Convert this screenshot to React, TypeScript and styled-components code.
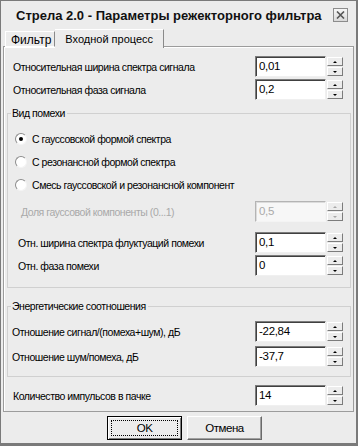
import React from 'react';
import styled, {createGlobalStyle} from 'styled-components';

const GlobalStyle = createGlobalStyle`
  html, body {
    margin: 0;
    padding: 0;
    background: #ececec;
  }
  body {
    font-family: "Liberation Sans", Arial, sans-serif;
    font-size: 10.5px;
    letter-spacing: -0.45px;
    color: #000;
  }
  * {
    box-sizing: border-box;
  }
`;

const Window = styled.div`
  width: 358px;
  height: 446px;
  background: #ececec;
  border-style: solid;
  border-color: #7a7a7a;
  border-width: 1px 2px 3px 1px;
  padding: 0 2px;
  display: flex;
  flex-direction: column;
`;

const TitleBar = styled.div`
  height: 27px;
  display: flex;
  align-items: center;
  justify-content: space-between;
  padding: 1px 6px 0 13px;
`;

const TitleText = styled.span`
  font-family: "Liberation Sans", Arial, sans-serif;
  font-weight: bold;
  font-size: 13px;
  letter-spacing: 0;
  color: #111;
`;

const CloseButton = styled.div`
  width: 15px;
  height: 14px;
  border: 1px solid #8c8c8c;
  background: linear-gradient(#f6f6f6, #d8d8d8);
  display: flex;
  align-items: center;
  justify-content: center;
`;

const TabStrip = styled.div`
  height: 19px;
  display: flex;
  align-items: flex-end;
  padding-left: 2px;
  position: relative;
  z-index: 1;
`;

const Tab = styled.div<{$active?: boolean}>`
  height: ${p => (p.$active ? 19 : 16)}px;
  padding: ${p => (p.$active ? '3px 10px 0 10px' : '2px 3px 0 5px')};
  background: #ececec;
  border-style: solid;
  border-color: #fff #8a8a8a ${p => (p.$active ? '#ececec' : '#fff')} #fff;
  border-width: ${p => (p.$active ? '1px 1px 0 0' : '1px 1px 1px 1px')};
  margin-bottom: ${p => (p.$active ? -1 : 0)}px;
  font-size: ${p => (p.$active ? 11 : 12)}px;
  letter-spacing: 0;
  line-height: 12px;
  white-space: nowrap;
`;

const Panel = styled.div`
  height: 366px;
  margin-top: -1px;
  border: 1px solid #9c9c9c;
  box-shadow: inset 1px 1px 0 #fff;
  padding: 9px 0 0 0;
  display: flex;
  flex-direction: column;
`;

const FieldRow = styled.div<{$left: number; $right: number; $top?: number}>`
  display: flex;
  align-items: center;
  height: 21px;
  margin-top: ${p => p.$top ?? 0}px;
  padding-left: ${p => p.$left}px;
  padding-right: ${p => p.$right}px;
`;

const FieldLabel = styled.span<{$disabled?: boolean}>`
  flex: 1;
  white-space: nowrap;
  color: ${p => (p.$disabled ? '#a9a9a9' : '#000')};
`;

const Input = styled.div<{$disabled?: boolean}>`
  width: 71px;
  height: 21px;
  border-style: solid;
  border-width: 1px;
  border-color: ${p => (p.$disabled ? '#b4b4b4 #f4f4f4 #f4f4f4 #b4b4b4' : '#7c7c7c #f0f0f0 #f0f0f0 #7c7c7c')};
  box-shadow: inset 1px 1px 0 ${p => (p.$disabled ? '#dcdcdc' : '#404040')};
  background: ${p => (p.$disabled ? '#f7f7f7' : '#fff')};
  color: ${p => (p.$disabled ? '#aaaaaa' : '#000')};
  padding: 0 0 0 3px;
  font-size: 11.5px;
  letter-spacing: -0.3px;
  line-height: 19px;
`;

const Spinner = styled.div`
  width: 16px;
  height: 19px;
  margin-left: 1px;
  display: flex;
  flex-direction: column;
  justify-content: space-between;
`;

const SpinButton = styled.div<{$down?: boolean; $disabled?: boolean}>`
  height: 9px;
  background: #ececec;
  border-style: solid;
  border-width: 1px;
  border-color: #fff #7c7c7c #7c7c7c #fff;
  display: flex;
  align-items: center;
  justify-content: center;

  &::after {
    content: '';
    width: 0;
    height: 0;
    border-left: 2px solid transparent;
    border-right: 2px solid transparent;
    ${p => (p.$down ? 'border-top' : 'border-bottom')}: 2px solid ${p => (p.$disabled ? '#a8a8a8' : '#000')};
  }
`;

const GroupBox = styled.fieldset<{$top: number; $bottom: number}>`
  margin: ${p => p.$top}px 2px 0 3px;
  padding: 0 0 ${p => p.$bottom}px 0;
  min-width: 0;
  border: 1px solid #d0d0d0;
  border-radius: 0;
  display: flex;
  flex-direction: column;
`;

const GroupLegend = styled.legend`
  margin-left: 3px;
  padding: 0 2px 0 1px;
  line-height: 13px;
`;

const GroupBody = styled.div<{$pad: number}>`
  padding-top: ${p => p.$pad}px;
  display: flex;
  flex-direction: column;
`;

const RadioRow = styled.div`
  height: 23px;
  display: flex;
  align-items: center;
  gap: 5px;
  padding-left: 7px;
`;

const RadioCircle = styled.span<{$checked?: boolean}>`
  width: 12px;
  height: 12px;
  border-radius: 50%;
  border: 1px solid;
  border-color: #8c8c8c #f4f4f4 #f4f4f4 #8c8c8c;
  background: #fff;
  display: flex;
  align-items: center;
  justify-content: center;

  &::after {
    content: '';
    width: 4px;
    height: 4px;
    border-radius: 50%;
    background: ${p => (p.$checked ? '#000' : 'transparent')};
  }
`;

const ButtonBar = styled.div`
  height: 31px;
  display: flex;
  gap: 5px;
  padding: 4px 0 0 104px;
`;

const PushButton = styled.div<{$default?: boolean}>`
  width: 75px;
  height: 24px;
  background: #ececec;
  border-style: solid;
  border-width: 1px;
  border-color: ${p => (p.$default ? '#000' : '#fff #6a6a6a #6a6a6a #fff')};
  box-shadow: ${p => (p.$default ? 'inset 1px 1px 0 #fff, inset -1px -1px 0 #7c7c7c' : 'inset -1px -1px 0 #a0a0a0')};
  display: flex;
  align-items: center;
  justify-content: center;
  padding: 3px;
`;

const FocusFrame = styled.div<{$focused?: boolean}>`
  flex: 1;
  align-self: stretch;
  display: flex;
  align-items: center;
  justify-content: center;
  border: 1px dotted ${p => (p.$focused ? '#000' : 'transparent')};
  font-size: 11.5px;
`;

type Field = {label: string; value: string; disabled?: boolean};

const SpinField = ({label, value, disabled, left, right, top}: Field & {left: number; right: number; top?: number}) => (
    <FieldRow $left={left} $right={right} $top={top}>
        <FieldLabel $disabled={disabled}>{label}</FieldLabel>
        <Input $disabled={disabled}>{value}</Input>
        <Spinner>
            <SpinButton $disabled={disabled}/>
            <SpinButton $down $disabled={disabled}/>
        </Spinner>
    </FieldRow>
);

const noiseKinds = [
    'С гауссовской формой спектра',
    'С резонансной формой спектра',
    'Смесь гауссовской и резонансной компонент',
];

const App = () => {
    return (
        <>
            <GlobalStyle/>
            <Window>
                <TitleBar>
                    <TitleText>Стрела 2.0 - Параметры режекторного фильтра</TitleText>
                    <CloseButton>
                        <svg width="9" height="8" viewBox="0 0 9 8">
                            <path d="M1 0.5 L8 7.5 M8 0.5 L1 7.5" stroke="#555" strokeWidth="1.6"/>
                        </svg>
                    </CloseButton>
                </TitleBar>

                <TabStrip>
                    <Tab>Фильтр</Tab>
                    <Tab $active>Входной процесс</Tab>
                </TabStrip>

                <Panel>
                    <SpinField left={9} right={10} label="Относительная ширина спектра сигнала" value="0,01"/>
                    <SpinField left={9} right={10} top={2} label="Относительная фаза сигнала" value="0,2"/>

                    <GroupBox $top={7} $bottom={11}>
                        <GroupLegend>Вид помехи</GroupLegend>
                        <GroupBody $pad={7}>
                            {noiseKinds.map((kind, i) => (
                                <RadioRow key={kind}>
                                    <RadioCircle $checked={i === 0}/>
                                    {kind}
                                </RadioRow>
                            ))}
                            <SpinField left={13} right={7} top={5} disabled
                                       label="Доля гауссовой компоненты (0...1)" value="0,5"/>
                            <SpinField left={10} right={7} top={10}
                                       label="Отн. ширина спектра флуктуаций помехи" value="0,1"/>
                            <SpinField left={10} right={7} top={2} label="Отн. фаза помехи" value="0"/>
                        </GroupBody>
                    </GroupBox>

                    <GroupBox $top={12} $bottom={9}>
                        <GroupLegend>Энергетические соотношения</GroupLegend>
                        <GroupBody $pad={8}>
                            <SpinField left={4} right={7} label="Отношение сигнал/(помеха+шум), дБ" value="-22,84"/>
                            <SpinField left={4} right={7} top={4} label="Отношение шум/помеха, дБ" value="-37,7"/>
                        </GroupBody>
                    </GroupBox>

                    <SpinField left={9} right={10} top={8} label="Количество импульсов в пачке" value="14"/>
                </Panel>

                <ButtonBar>
                    <PushButton $default>
                        <FocusFrame $focused>OK</FocusFrame>
                    </PushButton>
                    <PushButton>
                        <FocusFrame>Отмена</FocusFrame>
                    </PushButton>
                </ButtonBar>
            </Window>
        </>
    );
};

export default App;
